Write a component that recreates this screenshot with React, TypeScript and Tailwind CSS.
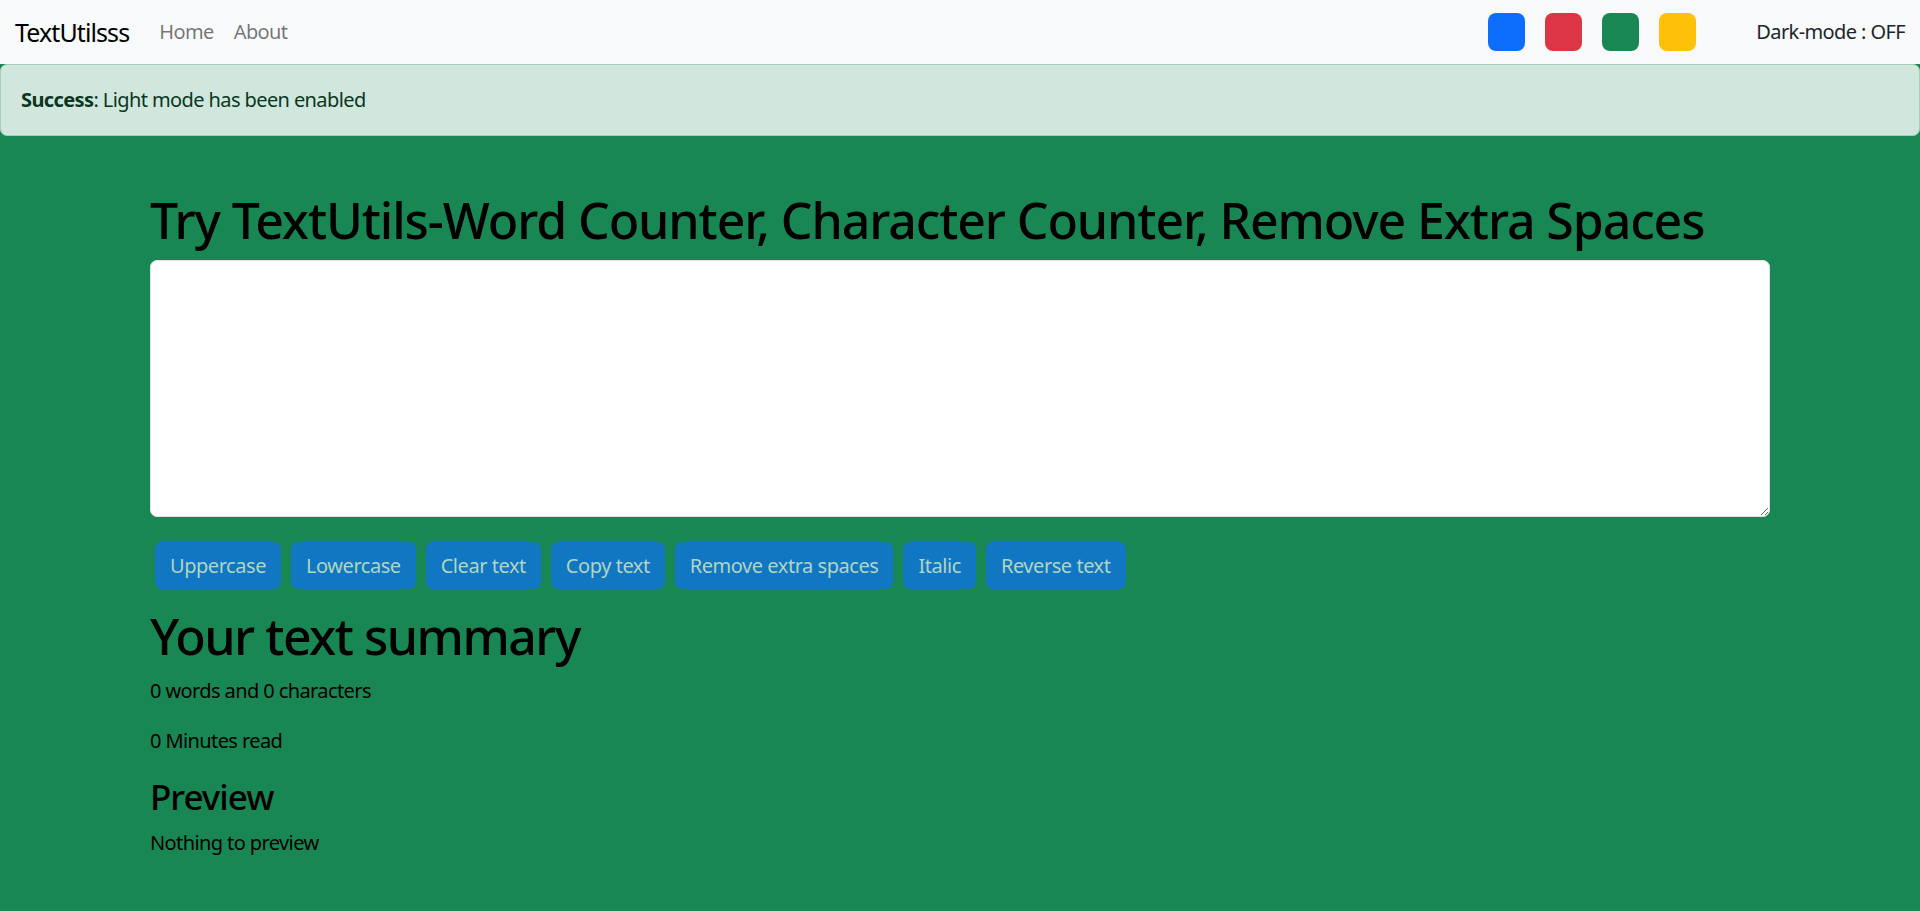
import { useState } from "react";

const font = { fontFamily: '"Segoe UI", "Noto Sans", "Open Sans", sans-serif' };

function Navbar() {
  const swatches = ["bg-[#0d6efd]", "bg-[#dc3545]", "bg-[#198754]", "bg-[#ffc107]"];
  return (
    <nav className="h-[64px] bg-[#f8f9fa] flex items-center px-[15px]">
      <a className="text-[25px] leading-[37px] tracking-[-0.9px] text-black mr-[20px]">TextUtilsss</a>
      <div className="flex items-center text-[20px] tracking-[-0.6px] text-black/55">
        <a className="px-[10px]">Home</a>
        <a className="px-[10px]">About</a>
      </div>
      <div className="ml-auto flex items-center">
        <div className="flex gap-[20px] mr-[60px]">
          {swatches.map((c) => (
            <div key={c} className={`${c} w-[37px] h-[38px] rounded-[8px]`} />
          ))}
        </div>
        <span className="text-[20px] tracking-[-0.6px] text-[#212529]">Dark-mode : OFF</span>
      </div>
    </nav>
  );
}

export default function App() {
  const [text, setText] = useState("");
  const buttons = [
    "Uppercase",
    "Lowercase",
    "Clear text",
    "Copy text",
    "Remove extra spaces",
    "Italic",
    "Reverse text",
  ];

  return (
    <div className="min-h-screen bg-[#198754]" style={font}>
      <Navbar />
      {/* alert */}
      <div className="h-[72px] bg-[#d1e7dd] border border-[#a3cfbb] rounded-[7px] px-[20px] flex items-center text-[20px] tracking-[-0.6px] text-[#0a3622]">
        <span>
          <strong className="font-bold">Success</strong>: Light mode has been enabled
        </span>
      </div>

      <div className="w-[1650px] mx-auto px-[15px] text-black">
        <h1 className="mt-[54px] mb-[10px] text-[50px] leading-[60px] tracking-[-1.1px] font-medium whitespace-nowrap">
          Try TextUtils-Word Counter, Character Counter, Remove Extra Spaces
        </h1>
        <textarea
          value={text}
          onChange={(e) => setText(e.target.value)}
          rows={8}
          className="block w-full h-[257px] bg-white border border-[#dee2e6] rounded-[7px] px-[15px] py-[7px] text-[20px] outline-none"
        />
        <div className="flex gap-[10px] ml-[5px] mt-[25px]">
          {buttons.map((b) => (
            <button
              key={b}
              disabled
              className="h-[47px] px-[15px] rounded-[7px] bg-[#1177c2] text-[#afd5c3] text-[20px] leading-[30px] tracking-[-0.45px]"
            >
              {b}
            </button>
          ))}
        </div>

        <h1 className="mt-[17px] mb-[10px] text-[50px] leading-[60px] tracking-[-1.5px] font-medium">
          Your text summary
        </h1>
        <div className="text-[20px] leading-[30px] tracking-[-0.6px]">
          <p className="mb-[20px]">0 words and 0 characters</p>
          <p className="mb-[20px]">0 Minutes read</p>
        </div>
        <h3 className="text-[35px] leading-[42px] tracking-[-1px] font-medium mb-[10px]">Preview</h3>
        <p className="text-[20px] leading-[30px] tracking-[-0.6px]">Nothing to preview</p>
      </div>
    </div>
  );
}
